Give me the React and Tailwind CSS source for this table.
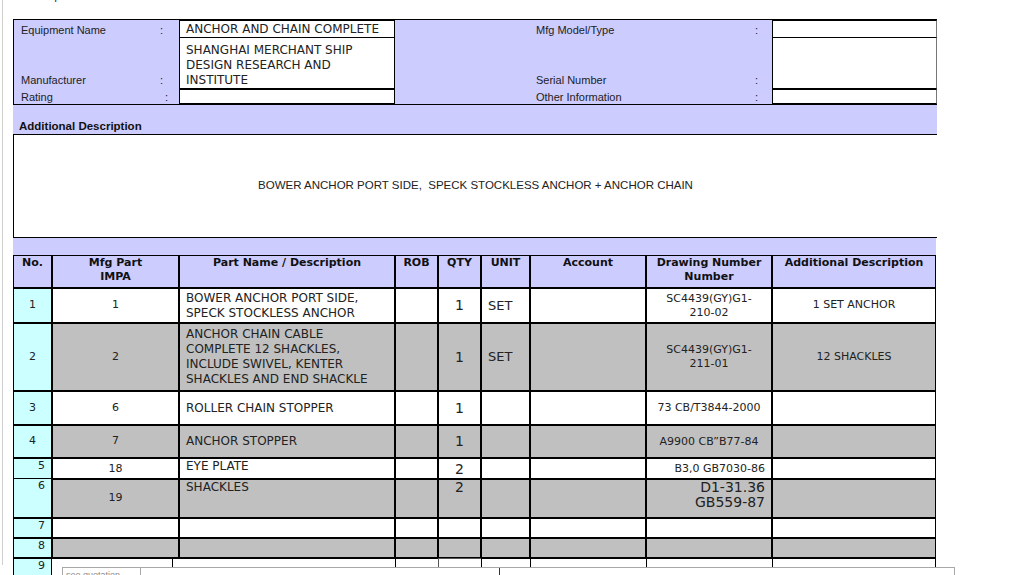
const VERDANA = "font-['DejaVu_Sans',Verdana,sans-serif]";
const TAHOMA = "font-['Liberation_Sans',Tahoma,Arial,sans-serif]";

const COLS = "grid grid-cols-[39px_127px_216px_43px_43px_49px_116px_126px_164px]";

const ROWS = [
  {
    no: "1", impa: "1", h: "h-[35px]", gray: false,
    name: ["BOWER ANCHOR PORT SIDE,", "SPECK STOCKLESS ANCHOR"],
    qty: "1", unit: "SET",
    drawing: ["SC4439(GY)G1-", "210-02"], add: "1 SET ANCHOR",
  },
  {
    no: "2", impa: "2", h: "h-[68px]", gray: true,
    name: ["ANCHOR CHAIN CABLE", "COMPLETE 12 SHACKLES,", "INCLUDE SWIVEL, KENTER", "SHACKLES AND END SHACKLE"],
    qty: "1", unit: "SET",
    drawing: ["SC4439(GY)G1-", "211-01"], add: "12 SHACKLES",
  },
  {
    no: "3", impa: "6", h: "h-[34px]", gray: false,
    name: ["ROLLER CHAIN STOPPER"], qty: "1", drawing: ["73 CB/T3844-2000"],
  },
  {
    no: "4", impa: "7", h: "h-[33px]", gray: true,
    name: ["ANCHOR STOPPER"], qty: "1", drawing: ["A9900 CB\u201DB77-84"],
  },
];

function Cell({ className = "", children }) {
  return <div className={"border border-black " + className}>{children}</div>;
}

function LabelRow({ label, h, align = "items-center", pr = "pr-[16px]", pl = "pl-[7px]" }) {
  return (
    <div className={`flex ${align} justify-between ${h} ${pl} ${pr} text-[11px] leading-[13px] text-[#222]`}>
      <span>{label}</span>
      <span>:</span>
    </div>
  );
}

export default function App() {
  return (
    <div className={`relative h-[575px] overflow-hidden bg-white ${TAHOMA}`}>
      <div className="ml-[2px] h-full border-l border-[#cfcfcf] pl-[10px]">
        <div className="-mt-[10px] pl-[1px] text-[11px] leading-[13px] text-[#222]">Please quote for the below:</div>

        <div className="mt-[16px] w-[924px]">
          {/* ── Equipment header ── */}
          <div className="flex border-t border-b border-l border-black bg-[#ccccff]">
            <div className="w-[165px] flex flex-col">
              <LabelRow label="Equipment Name" h="h-[18px] pt-[2px]" />
              <LabelRow label="Manufacturer" h="h-[50px] pb-[1px]" align="items-end" />
              <LabelRow label="Rating" h="h-[16px] pt-[2px]" pr="pr-[11px]" />
            </div>
            <div className={`w-[216px] flex flex-col bg-white text-[12px] text-[#222] ${VERDANA}`}>
              <div className="h-[18px] border border-black pl-[6px] leading-[17px]">ANCHOR AND CHAIN COMPLETE</div>
              <div className="h-[51px] border-x border-b border-black pl-[6px] pt-[5px] leading-[15px]">
                SHANGHAI MERCHANT SHIP<br />DESIGN RESEARCH AND<br />INSTITUTE
              </div>
              <div className="h-[15px] border border-black"></div>
            </div>
            <div className="w-[377px] flex flex-col">
              <LabelRow label="Mfg Model/Type" h="h-[18px] pt-[2px]" pl="pl-[141px]" pr="pr-[14px]" />
              <LabelRow label="Serial Number" h="h-[50px] pb-[1px]" align="items-end" pl="pl-[141px]" pr="pr-[14px]" />
              <LabelRow label="Other Information" h="h-[16px] pt-[2px]" pl="pl-[141px]" pr="pr-[14px]" />
            </div>
            <div className="w-[165px] flex flex-col bg-white">
              <div className="h-[18px] border border-black border-r-[#777]"></div>
              <div className="h-[51px] border-x border-b border-black border-r-[#777]"></div>
              <div className="h-[15px] border border-black border-r-[#777]"></div>
            </div>
          </div>

          {/* ── Additional description ── */}
          <div className="h-[29px] bg-[#ccccff] flex items-end pl-[6px] pb-[1px] text-[11.5px] font-bold leading-[13px] text-[#111]">
            Additional Description
          </div>
          <div className="h-[104px] border-y border-l border-black bg-white flex items-center justify-center text-[11.5px] text-[#222]">
            <span className="whitespace-pre">BOWER ANCHOR PORT SIDE,  SPECK STOCKLESS ANCHOR + ANCHOR CHAIN</span>
          </div>
          <div className="h-[17px] w-[923px] bg-[#ccccff]"></div>

          {/* ── Parts table ── */}
          <div className={`w-[923px] ${VERDANA} text-[#222]`}>
            <div className={`${COLS} h-[33px] bg-[#ccccff] text-[11px] font-bold leading-[14px] text-center text-[#111]`}>
              <Cell>No.</Cell>
              <Cell>Mfg Part<br />IMPA</Cell>
              <Cell>Part Name / Description</Cell>
              <Cell>ROB</Cell>
              <Cell>QTY</Cell>
              <Cell>UNIT</Cell>
              <Cell>Account</Cell>
              <Cell>Drawing Number<br />Number</Cell>
              <Cell>Additional Description</Cell>
            </div>

            {ROWS.map((r) => (
              <div key={r.no} className={`${COLS} ${r.h} ${r.gray ? "bg-[#c0c0c0]" : "bg-white"}`}>
                <Cell className="bg-[#ccffff] flex items-center justify-center text-[11px]">{r.no}</Cell>
                <Cell className="flex items-center justify-center text-[11px]">{r.impa}</Cell>
                <Cell className="flex flex-col justify-center pl-[6px] text-[12px] leading-[15px]">
                  {r.name.map((l) => <span key={l}>{l}</span>)}
                </Cell>
                <Cell />
                <Cell className="flex items-center justify-center text-[14px]">{r.qty}</Cell>
                <Cell className="flex items-center pl-[6px] text-[13px]">{r.unit}</Cell>
                <Cell />
                <Cell className="flex flex-col items-center justify-center text-[11px] leading-[14px]">
                  {r.drawing.map((l) => <span key={l}>{l}</span>)}
                </Cell>
                <Cell className="flex items-center justify-center text-[11px]">{r.add}</Cell>
              </div>
            ))}

            {/* row 5 */}
            <div className={`${COLS} h-[20px] bg-white`}>
              <Cell className="bg-[#ccffff] text-right pr-[6px] text-[11px] leading-[14px]">5</Cell>
              <Cell className="flex items-center justify-center text-[11px]">18</Cell>
              <Cell className="pl-[6px] text-[12px] leading-[15px]">EYE PLATE</Cell>
              <Cell />
              <Cell className="text-center text-[14px] leading-[20px]">2</Cell>
              <Cell />
              <Cell />
              <Cell className="flex items-center justify-end pr-[6px] text-[11px]">B3,0 GB7030-86</Cell>
              <Cell />
            </div>

            {/* row 6 */}
            <div className={`${COLS} h-[40px] bg-[#c0c0c0]`}>
              <Cell className="bg-[#ccffff] text-right pr-[6px] text-[11px] leading-[14px]">6</Cell>
              <Cell className="flex items-center justify-center text-[11px]">19</Cell>
              <Cell className="pl-[6px] text-[12px] leading-[16px]">SHACKLES</Cell>
              <Cell />
              <Cell className="text-center text-[14px] leading-[17px]">2</Cell>
              <Cell />
              <Cell />
              <Cell className="text-right pr-[6px] text-[14px] leading-[15px] pt-[1px]">D1-31.36<br />GB559-87</Cell>
              <Cell />
            </div>

            {["7", "8"].map((n, i) => (
              <div key={n} className={`${COLS} h-[20px] ${i ? "bg-[#c0c0c0]" : "bg-white"}`}>
                <Cell className="bg-[#ccffff] text-right pr-[6px] text-[11px] leading-[14px]">{n}</Cell>
                <Cell /><Cell /><Cell /><Cell /><Cell /><Cell /><Cell /><Cell />
              </div>
            ))}

            {/* row 9 */}
            <div className="grid grid-cols-[39px_120px_223px_43px_43px_49px_116px_126px_164px] h-[20px] bg-white">
              <div className="border border-black bg-[#ccffff] text-right pr-[6px] text-[11px] leading-[14px]">9</div>
              <div className="border-t border-black h-[9px]"></div>
              <div className="border-t border-l border-black h-[9px]"></div>
              <div className="border-t border-l border-black h-[9px]"></div>
              <div className="border-t border-l border-[#555] h-[9px]"></div>
              <div className="border-t border-l border-black h-[9px]"></div>
              <div className="border-t border-l border-black h-[9px]"></div>
              <div className="border-t border-l border-black h-[9px]"></div>
              <div className="border-t border-x border-black h-[9px]"></div>
            </div>
          </div>
        </div>
      </div>

      {/* bottom overlay panel */}
      <div className="absolute left-[62px] top-[567px] w-[893px] h-[20px] flex bg-white border border-[#a8a8a8]">
        <div className="w-[78px] border-r border-[#a8a8a8] pl-[3px] pt-[2px] text-[9px] leading-[10px] text-[#888]">see quotation</div>
        <div className="w-[358px]"></div>
        <div className="border-l border-[#333] h-[8px]"></div>
      </div>
    </div>
  );
}
